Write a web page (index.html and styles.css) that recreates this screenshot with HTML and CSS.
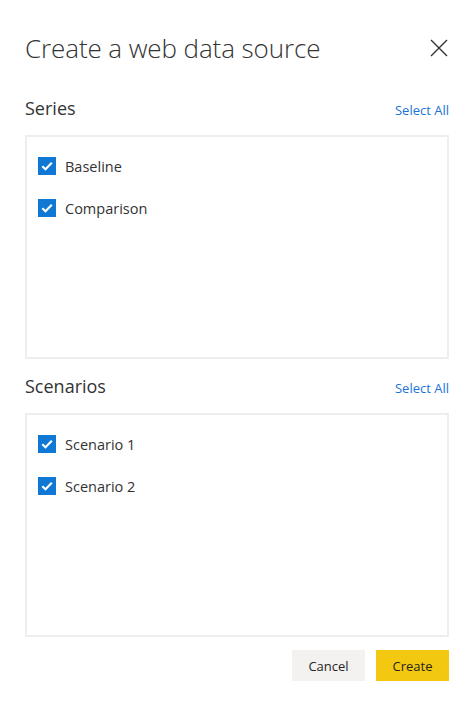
FILE: index.html
```html
<!DOCTYPE html>
<html>
<head>
<meta charset="utf-8">
<link rel="stylesheet" href="styles.css">
</head>
<body>
<div class="dialog">
  <div class="header">
    <h1 class="title">Create a web data source</h1>
    <button class="close" aria-label="Close">
      <svg width="18" height="18" viewBox="0 0 18 18"><path d="M1 1L17 17M17 1L1 17" stroke="#333" stroke-width="1.4" fill="none"/></svg>
    </button>
  </div>

  <div class="section-head">
    <span class="section-title">Series</span>
    <a class="select-all">Select All</a>
  </div>
  <div class="list">
    <label class="item"><span class="check"><svg width="12" height="10" viewBox="0 0 12 10"><path d="M1.3 5.2L4.5 8.2L10.8 1.8" stroke="#fff" stroke-width="2.2" fill="none"/></svg></span>Baseline</label>
    <label class="item"><span class="check"><svg width="12" height="10" viewBox="0 0 12 10"><path d="M1.3 5.2L4.5 8.2L10.8 1.8" stroke="#fff" stroke-width="2.2" fill="none"/></svg></span>Comparison</label>
  </div>

  <div class="section-head">
    <span class="section-title">Scenarios</span>
    <a class="select-all">Select All</a>
  </div>
  <div class="list">
    <label class="item"><span class="check"><svg width="12" height="10" viewBox="0 0 12 10"><path d="M1.3 5.2L4.5 8.2L10.8 1.8" stroke="#fff" stroke-width="2.2" fill="none"/></svg></span>Scenario 1</label>
    <label class="item"><span class="check"><svg width="12" height="10" viewBox="0 0 12 10"><path d="M1.3 5.2L4.5 8.2L10.8 1.8" stroke="#fff" stroke-width="2.2" fill="none"/></svg></span>Scenario 2</label>
  </div>

  <div class="footer">
    <button class="btn cancel">Cancel</button>
    <button class="btn create">Create</button>
  </div>
</div>
</body>
</html>
```
FILE: styles.css
```css
html, body {
  margin: 0;
  padding: 0;
  background: #fff;
}
body {
  font-family: "Open Sans", "Noto Sans", sans-serif;
  color: #252423;
}
* {
  box-sizing: border-box;
}
.dialog {
  padding: 29px 27px 0 25px;
  display: flex;
  flex-direction: column;
}
.header {
  display: flex;
  justify-content: space-between;
  align-items: center;
  height: 37px;
}
.title {
  margin: 0;
  font-weight: 300;
  font-size: 26px;
  color: #333;
  letter-spacing: -0.1px;
}
.close {
  border: none;
  background: none;
  padding: 0;
  margin-right: 1px;
  width: 18px;
  height: 18px;
  display: flex;
}
.section-head {
  display: flex;
  justify-content: space-between;
  align-items: baseline;
  margin-top: 30px;
  height: 24px;
}
.list + .section-head {
  margin-top: 15px;
}
.section-title {
  font-size: 18px;
  color: #333;
}
.select-all {
  font-size: 13px;
  color: #1a73d6;
  cursor: pointer;
}
.list {
  margin-top: 15px;
  border: 2px solid #eeeeee;
  height: 224px;
  padding: 20px 0 0 11px;
  display: flex;
  flex-direction: column;
  gap: 24px;
}
.item {
  display: flex;
  align-items: center;
  font-size: 14.5px;
  color: #333;
  height: 18px;
}
.check {
  width: 18px;
  height: 18px;
  background: #0f78d4;
  display: flex;
  align-items: center;
  justify-content: center;
  margin-right: 9px;
}
.footer {
  display: flex;
  justify-content: flex-end;
  gap: 11px;
  margin-top: 13px;
}
.btn {
  width: 73px;
  height: 31px;
  border: none;
  font-family: "Open Sans", "Noto Sans", sans-serif;
  font-size: 13px;
  color: #252423;
  padding: 0;
}
.cancel {
  background: #f3f2f1;
}
.create {
  background: #f2c811;
}
```
